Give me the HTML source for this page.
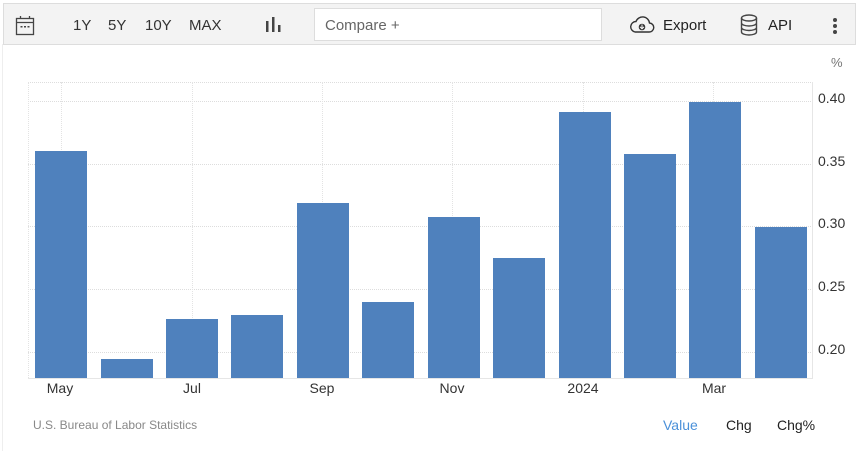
<!DOCTYPE html>
<html><head><style>
body{margin:0;width:857px;height:451px;background:#fff;font-family:"Liberation Sans",sans-serif;position:relative;overflow:hidden}
.a{position:absolute}
.tb{left:3px;top:3px;width:851px;height:40px;background:#f3f3f3;border:1px solid #ddd}
.t{font-size:15px;color:#333;top:17px}
.bar{position:absolute;background:#4f81bd;width:52px;bottom:73px}
.g{position:absolute;left:28px;width:785px;border-top:1px dotted #ddd}
.v{position:absolute;top:82px;height:296px;border-left:1px dotted #e3e3e3}
.y{position:absolute;left:818px;font-size:14px;color:#333}
.x{position:absolute;top:380px;font-size:14px;color:#333;transform:translateX(-50%)}
</style></head><body>
<div class="a" style="left:2px;top:44px;width:1px;height:407px;background:#eee"></div>
<div class="a tb"></div>
<svg class="a" style="left:15px;top:15px" width="20" height="22" viewBox="0 0 20 22"><rect x="1.5" y="3.5" width="17" height="16" fill="none" stroke="#444" stroke-width="1.3"/><line x1="1.5" y1="7.5" x2="18.5" y2="7.5" stroke="#444" stroke-width="1.3"/><line x1="5.5" y1="1" x2="5.5" y2="4" stroke="#444" stroke-width="1.3"/><line x1="14.5" y1="1" x2="14.5" y2="4" stroke="#444" stroke-width="1.3"/><rect x="5.5" y="11" width="2" height="1.5" fill="#444"/><rect x="9" y="11" width="2" height="1.5" fill="#444"/><rect x="12.5" y="11" width="2" height="1.5" fill="#444"/></svg>
<div class="a t" style="left:73px">1Y</div>
<div class="a t" style="left:108px">5Y</div>
<div class="a t" style="left:145px">10Y</div>
<div class="a t" style="left:189px">MAX</div>
<svg class="a" style="left:265px;top:16px" width="16" height="17"><rect x="1" y="5" width="2.5" height="11" fill="#444"/><rect x="7" y="1" width="2.5" height="15" fill="#444"/><rect x="13" y="9" width="2.5" height="7" fill="#444"/></svg>
<div class="a" style="left:314px;top:8px;width:286px;height:31px;background:#fff;border:1px solid #ddd"></div>
<div class="a t" style="left:325px;color:#666">Compare +</div>
<svg class="a" style="left:629px;top:16px" width="26" height="18" viewBox="0 0 26 18"><path d="M6 16 H20 A4.5 4.5 0 0 0 20.5 7 A7 7 0 0 0 7 5.5 A5.3 5.3 0 0 0 6 16 Z" fill="none" stroke="#333" stroke-width="1.4"/><circle cx="13" cy="11" r="3.3" fill="#333"/><path d="M13 8.5v4M11 10.8l2 2 2-2" stroke="#fff" stroke-width="1" fill="none"/></svg>
<div class="a t" style="left:663px;color:#222">Export</div>
<svg class="a" style="left:740px;top:14px" width="18" height="22" viewBox="0 0 18 22"><ellipse cx="9" cy="4" rx="7.5" ry="3" fill="none" stroke="#444" stroke-width="1.4"/><path d="M1.5 4v14c0 1.7 3.4 3 7.5 3s7.5-1.3 7.5-3V4M1.5 9c0 1.7 3.4 3 7.5 3s7.5-1.3 7.5-3M1.5 13.5c0 1.7 3.4 3 7.5 3s7.5-1.3 7.5-3" fill="none" stroke="#444" stroke-width="1.4"/></svg>
<div class="a t" style="left:768px;color:#222">API</div>
<div class="a" style="left:833px;top:18px;width:4px;height:4px;border-radius:2px;background:#444;box-shadow:0 6px 0 #444,0 12px 0 #444"></div>
<div class="a" style="left:831px;top:55px;font-size:13px;color:#777">%</div>
<div class="g" style="top:82px"></div>
<div class="g" style="top:101px"></div>
<div class="g" style="top:164px"></div>
<div class="g" style="top:226px"></div>
<div class="g" style="top:289px"></div>
<div class="g" style="top:352px"></div>
<div class="v" style="left:28px"></div><div class="v" style="left:61px"></div><div class="v" style="left:192px"></div><div class="v" style="left:322px"></div><div class="v" style="left:452px"></div><div class="v" style="left:583px"></div><div class="v" style="left:713px"></div>
<div class="a" style="left:28px;top:378px;width:785px;height:1px;background:#e6e6e6"></div>
<div class="a" style="left:812px;top:82px;width:1px;height:297px;background:#e6e6e6"></div>
<div class="bar" style="left:35px;top:151px"></div>
<div class="bar" style="left:101px;top:359px"></div>
<div class="bar" style="left:166px;top:319px"></div>
<div class="bar" style="left:231px;top:315px"></div>
<div class="bar" style="left:297px;top:203px"></div>
<div class="bar" style="left:362px;top:302px"></div>
<div class="bar" style="left:428px;top:217px"></div>
<div class="bar" style="left:493px;top:258px"></div>
<div class="bar" style="left:559px;top:112px"></div>
<div class="bar" style="left:624px;top:154px"></div>
<div class="bar" style="left:689px;top:102px"></div>
<div class="bar" style="left:755px;top:227px"></div>
<div class="y" style="top:90px">0.40</div>
<div class="y" style="top:153px">0.35</div>
<div class="y" style="top:215px">0.30</div>
<div class="y" style="top:278px">0.25</div>
<div class="y" style="top:341px">0.20</div>
<div class="x" style="left:60px">May</div>
<div class="x" style="left:192px">Jul</div>
<div class="x" style="left:322px">Sep</div>
<div class="x" style="left:452px">Nov</div>
<div class="x" style="left:583px">2024</div>
<div class="x" style="left:714px">Mar</div>
<div class="a" style="left:33px;top:418px;font-size:12px;color:#888">U.S. Bureau of Labor Statistics</div>
<div class="a" style="left:663px;top:417px;font-size:14px;color:#4a90d9">Value</div>
<div class="a" style="left:726px;top:417px;font-size:14px;color:#222">Chg</div>
<div class="a" style="left:777px;top:417px;font-size:14px;color:#222">Chg%</div>
</body></html>
